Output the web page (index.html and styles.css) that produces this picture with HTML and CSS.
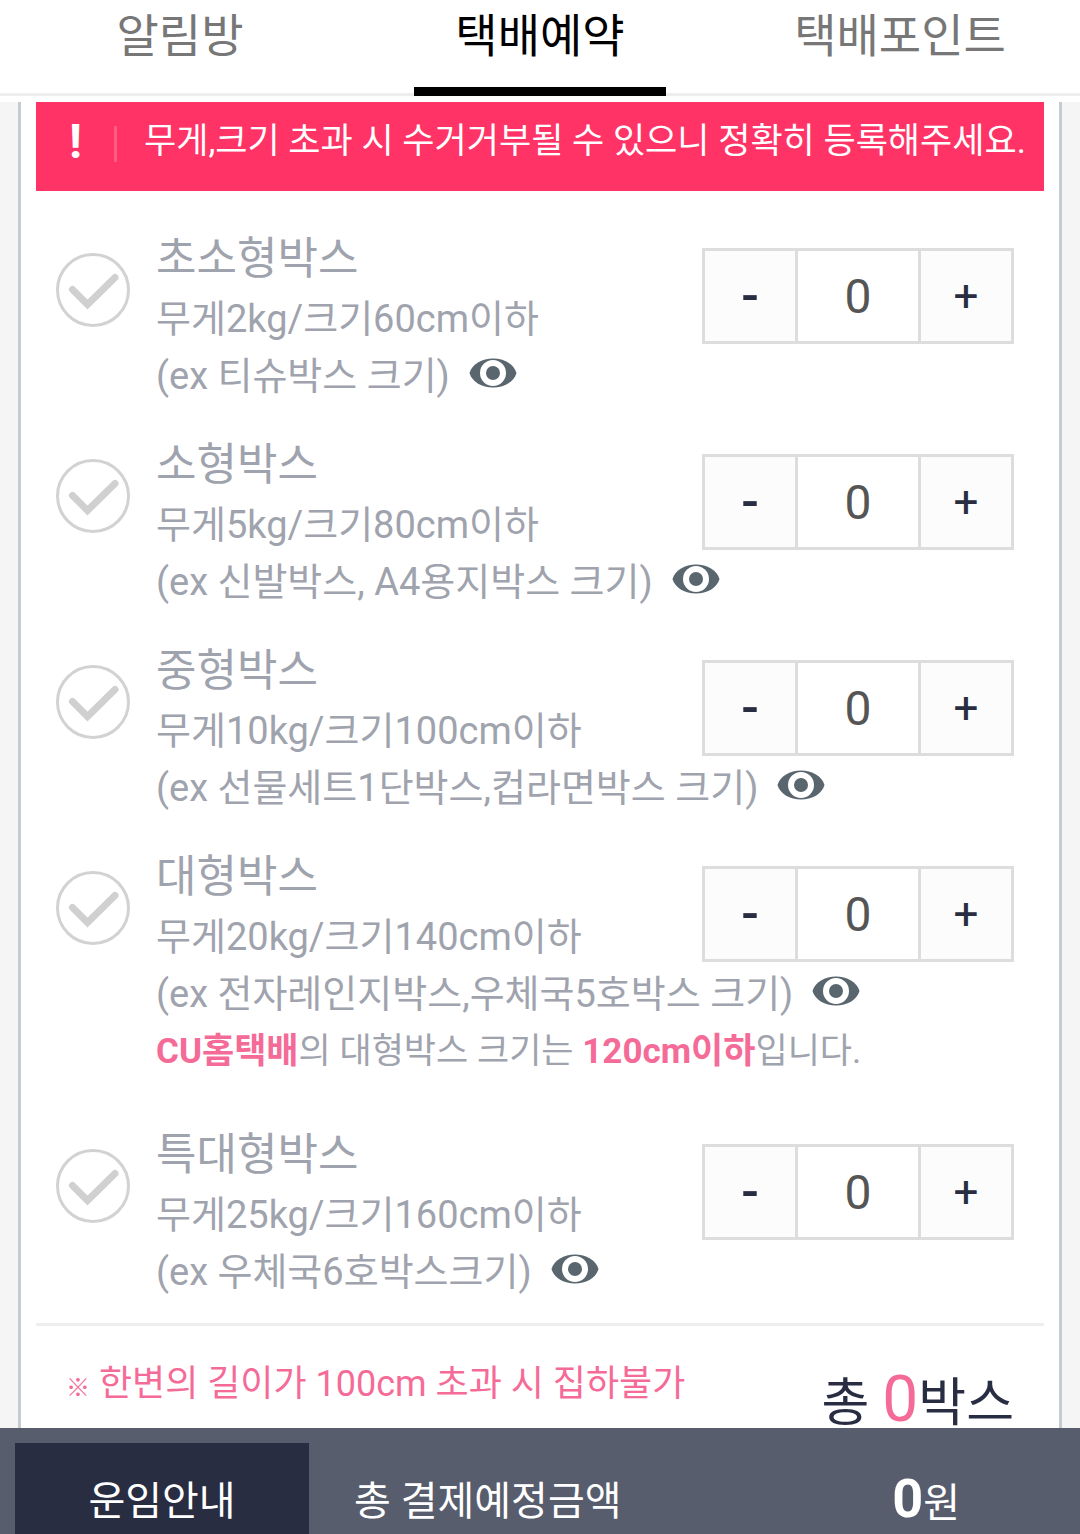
FILE: index.html
```html
<!DOCTYPE html>
<html lang="ko">
<head>
<meta charset="utf-8">
<meta name="viewport" content="width=device-width, initial-scale=1">
<title>택배예약</title>
<link rel="stylesheet" href="styles.css">
</head>
<body>
<svg class="sprite" aria-hidden="true">
  <symbol id="check" viewBox="0 0 74 74">
    <circle cx="37" cy="37" r="35.500" fill="none" stroke="#d2d2d2" stroke-width="3"/>
    <path d="M16.500 36.500 L31.500 51.500 L59 24.500" fill="none" stroke="#d0d0d0" stroke-width="7" stroke-linecap="round"/>
  </symbol>
  <symbol id="eye" viewBox="0 0 48 30">
    <path d="M0.500 15 C3 6 13 0.500 24 0.500 C35 0.500 45 6 47.500 15 C45 24 35 29.500 24 29.500 C13 29.500 3 24 0.500 15 Z" fill="#5a666e"/>
    <circle cx="24" cy="15" r="10" fill="none" stroke="#fff" stroke-width="6"/>
  </symbol>
</svg>

<header class="tabs-bar">
  <nav class="tabs">
    <a class="tab" href="#notice">알림방</a>
    <a class="tab tab-active" href="#reserve" aria-current="page">택배예약</a>
    <a class="tab" href="#point">택배포인트</a>
  </nav>
</header>

<main class="page">
  <section class="card">
    <p class="warning"><strong class="warning-mark">!</strong><span class="warning-text">무게,크기 초과 시 수거거부될 수 있으니 정확히 등록해주세요.</span></p>

    <ul class="boxes">
      <li class="box">
        <span class="pick"><input class="pick-input" type="checkbox" id="box1"><svg class="pick-icon"><use href="#check"/></svg></span>
        <label class="box-main" for="box1"><span class="box-name">초소형박스</span><span class="box-line">무게2kg/크기60cm이하</span></label>
        <div class="stepper">
          <button class="step step-minus" type="button">-</button>
          <input class="count" type="text" value="0" aria-label="초소형박스 수량">
          <button class="step" type="button">+</button>
        </div>
        <div class="box-more"><span class="box-line">(ex 티슈박스 크기)</span><button class="view" type="button" aria-label="보기"><svg class="eye"><use href="#eye"/></svg></button></div>
      </li>
      <li class="box">
        <span class="pick"><input class="pick-input" type="checkbox" id="box2"><svg class="pick-icon"><use href="#check"/></svg></span>
        <label class="box-main" for="box2"><span class="box-name">소형박스</span><span class="box-line">무게5kg/크기80cm이하</span></label>
        <div class="stepper">
          <button class="step step-minus" type="button">-</button>
          <input class="count" type="text" value="0" aria-label="소형박스 수량">
          <button class="step" type="button">+</button>
        </div>
        <div class="box-more"><span class="box-line">(ex 신발박스, A4용지박스 크기)</span><button class="view" type="button" aria-label="보기"><svg class="eye"><use href="#eye"/></svg></button></div>
      </li>
      <li class="box">
        <span class="pick"><input class="pick-input" type="checkbox" id="box3"><svg class="pick-icon"><use href="#check"/></svg></span>
        <label class="box-main" for="box3"><span class="box-name">중형박스</span><span class="box-line">무게10kg/크기100cm이하</span></label>
        <div class="stepper">
          <button class="step step-minus" type="button">-</button>
          <input class="count" type="text" value="0" aria-label="중형박스 수량">
          <button class="step" type="button">+</button>
        </div>
        <div class="box-more"><span class="box-line">(ex 선물세트1단박스,컵라면박스 크기)</span><button class="view" type="button" aria-label="보기"><svg class="eye"><use href="#eye"/></svg></button></div>
      </li>
      <li class="box">
        <span class="pick"><input class="pick-input" type="checkbox" id="box4"><svg class="pick-icon"><use href="#check"/></svg></span>
        <label class="box-main" for="box4"><span class="box-name">대형박스</span><span class="box-line">무게20kg/크기140cm이하</span></label>
        <div class="stepper">
          <button class="step step-minus" type="button">-</button>
          <input class="count" type="text" value="0" aria-label="대형박스 수량">
          <button class="step" type="button">+</button>
        </div>
        <div class="box-more"><span class="box-line">(ex 전자레인지박스,우체국5호박스 크기)</span><button class="view" type="button" aria-label="보기"><svg class="eye"><use href="#eye"/></svg></button></div>
        <p class="box-note"><strong class="pink">CU홈택배</strong>의 대형박스 크기는 <strong class="pink">120cm이하</strong>입니다.</p>
      </li>
      <li class="box">
        <span class="pick"><input class="pick-input" type="checkbox" id="box5"><svg class="pick-icon"><use href="#check"/></svg></span>
        <label class="box-main" for="box5"><span class="box-name">특대형박스</span><span class="box-line">무게25kg/크기160cm이하</span></label>
        <div class="stepper">
          <button class="step step-minus" type="button">-</button>
          <input class="count" type="text" value="0" aria-label="특대형박스 수량">
          <button class="step" type="button">+</button>
        </div>
        <div class="box-more"><span class="box-line">(ex 우체국6호박스크기)</span><button class="view" type="button" aria-label="보기"><svg class="eye"><use href="#eye"/></svg></button></div>
      </li>
    </ul>

    <div class="summary">
      <p class="limit"><span class="limit-mark">※</span> 한변의 길이가 100cm 초과 시 집하불가</p>
      <p class="total">총 <span class="total-count">0</span>박스</p>
    </div>
  </section>
</main>

<footer class="pay-bar">
  <button class="fare" type="button">운임안내</button>
  <span class="pay-label">총 결제예정금액</span>
  <span class="pay-sum"><strong class="pay-number">0</strong>원</span>
</footer>
</body>
</html>
```
FILE: styles.css
```css
* {
  box-sizing: border-box;
}

body {
  margin: 0;
  min-height: 100vh;
  display: flex;
  flex-direction: column;
  background: #f5f5f5;
  color: #9fa3ad;
  font-family: Roboto, "Noto Sans CJK KR", sans-serif;
  font-size: 38px;
}

p,
ul {
  margin: 0;
  padding: 0;
}

button,
input {
  margin: 0;
  padding: 0;
  border: 0;
  font: inherit;
  color: inherit;
}

.sprite {
  display: none;
}

/* Tabs */
.tabs-bar {
  padding-bottom: 6px;
  background: #fff;
}

.tabs {
  display: grid;
  grid-template-columns: repeat(3, 1fr);
  height: 96px;
  border-bottom: 3px solid #eee;
}

.tab {
  height: 96px;
  display: grid;
  grid-template-rows: 72px 15px 9px;
  justify-items: center;
  color: #777;
  font-size: 46px;
  line-height: 72px;
  text-decoration: none;
}

.tab-active {
  color: #000;
}

.tab-active::after {
  content: "";
  grid-row: 3;
  width: 70%;
  background: #000;
}

/* Card */
.page {
  flex: 1;
  display: flex;
  padding: 0 18px;
}

.card {
  flex: 1;
  min-width: 0;
  padding: 0 15px;
  border: solid #c5cbce;
  border-width: 0 3px;
  background: #fff;
}

.warning {
  display: flex;
  align-items: flex-start;
  height: 89px;
  padding: 15px 0 0 33px;
  background: #ff3366;
  color: #fff;
  font-size: 35px;
  line-height: 50px;
  white-space: nowrap;
}

.warning-mark {
  width: 45px;
  font-size: 48px;
}

.warning-text::before {
  content: "";
  display: inline-block;
  width: 3px;
  height: 36px;
  margin-right: 27px;
  background: #ff5c85;
  vertical-align: middle;
}

/* Box sizes */
.boxes {
  display: grid;
  gap: 29px;
  padding: 37px 30px 22px 20px;
  border-bottom: 3px solid #eee;
  list-style: none;
}

.box {
  display: grid;
  grid-template-columns: 74px 1fr auto;
  column-gap: 26px;
}

.pick {
  display: grid;
  align-self: start;
  margin-top: 25px;
}

.pick-input,
.pick-icon {
  grid-area: 1 / 1;
  width: 74px;
  height: 74px;
}

.pick-input {
  appearance: none;
  border-radius: 50%;
}

.pick-icon {
  pointer-events: none;
}

.box-main {
  display: grid;
}

.box-name {
  font-size: 44px;
  line-height: 63px;
}

.box-line {
  line-height: 57px;
  white-space: nowrap;
}

.box-more {
  grid-column: 2 / -1;
  display: flex;
  align-items: center;
  gap: 19px;
}

.view {
  display: flex;
  padding-bottom: 8px;
  background: none;
}

.eye {
  width: 48px;
  height: 30px;
}

.box-note {
  grid-column: 2 / -1;
  padding-bottom: 15px;
  font-size: 35px;
  line-height: 57px;
}

.pink {
  color: #f56b98;
}

.stepper {
  align-self: start;
  display: grid;
  grid-template-columns: 90px 120px 90px;
  gap: 3px;
  margin-top: 20px;
  padding: 3px;
  background: #ddd;
}

.step,
.count {
  width: 100%;
  height: 90px;
  text-align: center;
}

.step {
  background: #fcfcfc;
  color: #292d42;
  font-size: 44px;
}

.step-minus {
  font-size: 52px;
  font-weight: 500;
  line-height: 48px;
}

.count {
  background: #fff;
  color: #555;
  font-size: 48px;
}

/* Totals */
.summary {
  display: flex;
  justify-content: space-between;
  align-items: flex-start;
  height: 102px;
  padding: 30px 30px 0;
}

.limit {
  color: #f56b98;
  font-size: 36px;
  line-height: 57px;
}

.limit-mark {
  font-size: 24px;
}

.total {
  padding-top: 8px;
  color: #292d42;
  font-size: 52px;
  line-height: 72px;
}

.total-count {
  color: #f56b98;
  font-size: 64px;
}

/* Payment bar */
.pay-bar {
  display: grid;
  grid-template-columns: 294px 1fr auto;
  column-gap: 45px;
  padding: 15px 120px 0 15px;
  background: #585d6d;
  color: #fff;
  font-size: 40px;
  line-height: 64px;
}

.fare,
.pay-label,
.pay-sum {
  height: 91px;
  padding-top: 27px;
}

.fare {
  background: #292d42;
}

.pay-sum {
  padding-top: 24px;
}

.pay-number {
  font-size: 54px;
}
```
